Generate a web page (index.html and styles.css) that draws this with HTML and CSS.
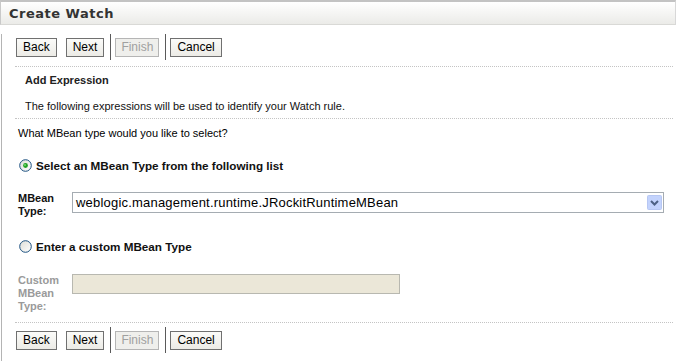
FILE: index.html
```html
<!DOCTYPE html>
<html>
<head>
<meta charset="utf-8">
<link rel="stylesheet" href="styles.css">
</head>
<body>
<div class="page">
  <div class="header"><span class="title">Create Watch</span></div>
  <div class="content">
    <div class="buttons top">
      <button class="btn">Back</button>
      <button class="btn">Next</button>
      <span class="sep"></span>
      <button class="btn disabled">Finish</button>
      <span class="sep"></span>
      <button class="btn">Cancel</button>
    </div>
    <div class="rule"></div>
    <div class="intro">
      <div class="subtitle">Add Expression</div>
      <div class="desc">The following expressions will be used to identify your Watch rule.</div>
    </div>
    <div class="rule"></div>
    <div class="question">What MBean type would you like to select?</div>
    <div class="radio-row first">
      <svg class="radio" width="13" height="13" viewBox="0 0 13 13"><defs><linearGradient id="rg1" x1="0" y1="0" x2="1" y2="1"><stop offset="0" stop-color="#dcdcd6"/><stop offset="1" stop-color="#ffffff"/></linearGradient></defs><circle cx="6.5" cy="6.5" r="5.8" fill="url(#rg1)" stroke="#1c5180" stroke-width="1"/><circle cx="6.5" cy="6.5" r="2.4" fill="#21a121"/><circle cx="6" cy="6" r="1" fill="#6fd86f"/></svg>
      <span class="radio-label">Select an MBean Type from the following list</span>
    </div>
    <div class="field-row">
      <div class="field-label">MBean<br>Type:</div>
      <div class="select">
        <span class="select-text">weblogic.management.runtime.JRockitRuntimeMBean</span>
        <svg class="arrow" width="15" height="15" viewBox="0 0 15 15"><rect x="0.5" y="0.5" width="14" height="14" rx="1" fill="#c3d3fd" stroke="#b7c7f3"/><path d="M4 6 L7.5 9.5 L11 6" fill="none" stroke="#4d6185" stroke-width="2"/></svg>
      </div>
    </div>
    <div class="radio-row second">
      <svg class="radio" width="13" height="13" viewBox="0 0 13 13"><defs><linearGradient id="rg2" x1="0" y1="0" x2="1" y2="1"><stop offset="0" stop-color="#dcdcd6"/><stop offset="1" stop-color="#ffffff"/></linearGradient></defs><circle cx="6.5" cy="6.5" r="5.8" fill="url(#rg2)" stroke="#1c5180" stroke-width="1"/></svg>
      <span class="radio-label">Enter a custom MBean Type</span>
    </div>
    <div class="field-row custom">
      <div class="field-label muted">Custom<br>MBean<br>Type:</div>
      <div class="input-disabled"></div>
    </div>
    <div class="rule"></div>
    <div class="buttons bottom">
      <button class="btn">Back</button>
      <button class="btn">Next</button>
      <span class="sep"></span>
      <button class="btn disabled">Finish</button>
      <span class="sep"></span>
      <button class="btn">Cancel</button>
    </div>
  </div>
</div>
</body>
</html>
```
FILE: styles.css
```css
html, body {
  margin: 0;
  padding: 0;
  background: #ffffff;
}
body {
  font-family: "Liberation Sans", Arial, sans-serif;
  font-size: 11px;
  color: #000;
}
.page {
  width: 677px;
  height: 361px;
  overflow: hidden;
}
.header {
  height: 22px;
  border-top: 2px solid #c3c3c3;
  border-bottom: 1px solid #d9d9d6;
  border-left: 1px solid #c9c9c9;
  border-right: 1px solid #d8d8d8;
  margin-right: 1px;
  background: linear-gradient(#ffffff, #ebebe8);
  display: flex;
  align-items: center;
  padding-left: 8px;
}
.title {
  font-family: "DejaVu Sans", sans-serif;
  font-weight: bold;
  font-size: 13px;
  color: #333333;
  letter-spacing: 0.5px;
  padding-top: 1px;
}
.content {
  margin-left: 1px;
  border-left: 1px solid #b4b4b4;
  padding-left: 13px;
  margin-right: 4px;
  height: 336px;
}
.buttons {
  display: flex;
  align-items: center;
  height: 26px;
}
.buttons.top {
  margin-top: 9px;
  margin-bottom: 6px;
}
.buttons.bottom {
  margin-top: 4px;
}
.btn {
  font-family: "Liberation Sans", Arial, sans-serif;
  font-size: 12px;
  height: 19px;
  padding: 0 6px;
  margin: 0 1px 0 1px;
  border: 1px solid #707070;
  background: linear-gradient(#fbfbf9, #ecebe6);
  color: #000;
  line-height: 17px;
  border-radius: 0;
}
.btn + .btn {
  margin-left: 8px;
}
.btn.disabled {
  color: #a0a0a0;
  border-color: #b5b5b5;
  background: #efefec;
  padding: 0 5px;
}
.sep {
  width: 1px;
  height: 26px;
  background: #5a5a5a;
  margin: 0 3px 0 5px;
}
.rule {
  border-top: 1px dotted #c4c4c4;
  height: 0;
}
.intro {
  padding-left: 10px;
  padding-top: 7px;
  padding-bottom: 5px;
}
.subtitle {
  font-weight: bold;
  color: #222;
  height: 18px;
  line-height: 13px;
}
.desc {
  line-height: 14px;
  margin-top: 7px;
  color: #111;
}
.question {
  padding-left: 3px;
  margin-top: 7px;
  line-height: 14px;
}
.radio-row {
  display: flex;
  align-items: center;
  padding-left: 4px;
  height: 16px;
}
.radio-row.first {
  margin-top: 17px;
}
.radio-row.second {
  margin-top: 20px;
}
.radio {
  display: block;
  margin-right: 4px;
}
.radio-label {
  font-weight: bold;
  color: #111;
  font-size: 11.7px;
}
.field-row {
  display: flex;
  align-items: flex-start;
  padding-left: 3px;
}
.field-row:not(.custom) {
  margin-top: 19px;
}
.field-label {
  width: 54px;
  font-weight: bold;
  line-height: 13px;
  color: #111;
}
.field-label.muted {
  color: #9a9a9a;
}
.select {
  width: 592px;
  border: 1px solid #a5acb2;
  display: flex;
  align-items: center;
  justify-content: space-between;
  padding: 0 1px 0 3px;
  box-sizing: border-box;
  height: 21px;
}
.select-text {
  font-family: "Liberation Sans", Arial, sans-serif;
  font-size: 13px;
  letter-spacing: 0.2px;
  color: #000;
}
.arrow {
  display: block;
}
.field-row.custom {
  margin-top: 20px;
  height: 40px;
  margin-bottom: 8px;
}
.input-disabled {
  width: 328px;
  height: 20px;
  box-sizing: border-box;
  background: #ebe7d8;
  border: 1px solid #b8b8b0;
}
```
